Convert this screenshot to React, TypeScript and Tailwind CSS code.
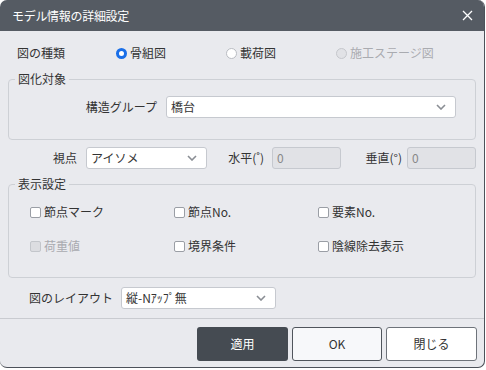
const font = { fontFamily: '"Noto Sans CJK JP", "Noto Sans", sans-serif' }

function Chevron() {
  return (
    <svg width="10" height="6" viewBox="0 0 10 6" className="shrink-0">
      <path d="M1 1l4 4 4-4" fill="none" stroke="#8a8e94" strokeWidth="1.6" />
    </svg>
  )
}

function Select({ value, className }: { value: string; className: string }) {
  return (
    <div
      className={`flex items-center justify-between bg-white border border-[#c6c9cf] rounded-[3px] pl-[4px] pr-[9px] text-[#333] ${className}`}
    >
      <span className="whitespace-nowrap">{value}</span>
      <Chevron />
    </div>
  )
}

function Radio({ label, checked, disabled }: { label: string; checked?: boolean; disabled?: boolean }) {
  return (
    <div className="flex items-center w-[110px]">
      {checked ? (
        <span className="w-[11px] h-[11px] rounded-full border-[3px] border-[#1a6fe8] bg-white" />
      ) : (
        <span
          className={`w-[11px] h-[11px] rounded-full border ${
            disabled ? "border-[#c5c7cc] bg-[#e1e2e6]" : "border-[#b9bcc2] bg-white"
          }`}
        />
      )}
      <span className={`ml-[3px] ${disabled ? "text-[#a9abb0]" : "text-[#333]"}`}>{label}</span>
    </div>
  )
}

function Check({ label, disabled }: { label: string; disabled?: boolean }) {
  return (
    <div className="flex items-center w-[144px] h-[16px]">
      <span
        className={`w-[11px] h-[11px] rounded-[2px] border ${
          disabled ? "border-[#c3c6cb] bg-[#dcdde1]" : "border-[#9a9ea5] bg-white"
        }`}
      />
      <span className={`ml-[3px] ${disabled ? "text-[#a9abb0]" : "text-[#333]"}`}>{label}</span>
    </div>
  )
}

export default function App() {
  return (
    <div className="min-h-screen bg-white text-[12px] leading-[16px]" style={font}>
      <div className="w-[485px] h-[368px] rounded-[7px] overflow-hidden bg-[#e9eaee] flex flex-col border-r border-b border-[#4d525a]">
        <div className="h-[31px] shrink-0 bg-[#555b63] flex items-center justify-between pl-[12px] pr-[11px]">
          <span className="text-white text-[12px] tracking-[-0.3px]">モデル情報の詳細設定</span>
          <svg width="11" height="11" viewBox="0 0 11 11">
            <path d="M1 1l9 9M10 1l-9 9" stroke="#fff" strokeWidth="1.3" />
          </svg>
        </div>

        <div className="flex items-center h-[22px] mt-[11px]">
          <span className="ml-[17px] w-[99px] text-[#333]">図の種類</span>
          <Radio label="骨組図" checked />
          <Radio label="載荷図" />
          <Radio label="施工ステージ図" disabled />
        </div>

        <fieldset className="mx-[8px] mt-[7px] border border-[#cdd0d5] rounded-[4px] pb-[21px]">
          <legend className="ml-[6px] px-[3px] text-[#333]">図化対象</legend>
          <div className="flex items-center mt-[9px]">
            <span className="w-[148px] text-right text-[#333]">構造グループ</span>
            <Select value="橋台" className="ml-[9px] w-[290px] h-[22px]" />
          </div>
        </fieldset>

        <div className="flex items-center h-[22px] mt-[7px] text-[#333]">
          <span className="w-[77px] text-right">視点</span>
          <Select value="アイソメ" className="ml-[9px] w-[121px] h-[22px]" />
          <span className="w-[57px] text-right whitespace-nowrap">水平(˚)</span>
          <div className="ml-[8px] w-[69px] h-[22px] bg-[#e1e2e6] border border-[#c6c9cf] rounded-[3px] pl-[4px] flex items-center text-[#888]">
            0
          </div>
          <span className="w-[61px] text-right whitespace-nowrap">垂直(°)</span>
          <div className="ml-[5px] w-[69px] h-[22px] bg-[#e1e2e6] border border-[#c6c9cf] rounded-[3px] pl-[4px] flex items-center text-[#888]">
            0
          </div>
        </div>

        <fieldset className="mx-[8px] mt-[7px] border border-[#cdd0d5] rounded-[4px] pb-[23px] pl-[21px]">
          <legend className="ml-[-15px] px-[3px] text-[#333]">表示設定</legend>
          <div className="grid grid-cols-[144px_144px_144px] gap-y-[18px] mt-[12px]">
            <Check label="節点マーク" />
            <Check label="節点No." />
            <Check label="要素No." />
            <Check label="荷重値" disabled />
            <Check label="境界条件" />
            <Check label="陰線除去表示" />
          </div>
        </fieldset>

        <div className="flex items-center h-[21px] mt-[9px] text-[#333]">
          <span className="w-[113px] text-right whitespace-nowrap">図のレイアウト</span>
          <Select value="縦-Nｱｯﾌﾟ無" className="ml-[8px] w-[155px] h-[22px]" />
        </div>

        <div className="mt-[10px] border-t border-[#c9cbd0]" />

        <div className="flex justify-end gap-[4px] pr-[7px] mt-[8px]">
          <button className="w-[91px] h-[34px] rounded-[3px] bg-[#454b52] text-white">適用</button>
          <button className="w-[90px] h-[34px] rounded-[3px] bg-[#f7f8fa] border border-[#50555c] text-[#333]">OK</button>
          <button className="w-[91px] h-[34px] rounded-[3px] bg-white border border-[#6e737a] text-[#333]">閉じる</button>
        </div>
      </div>
    </div>
  )
}
